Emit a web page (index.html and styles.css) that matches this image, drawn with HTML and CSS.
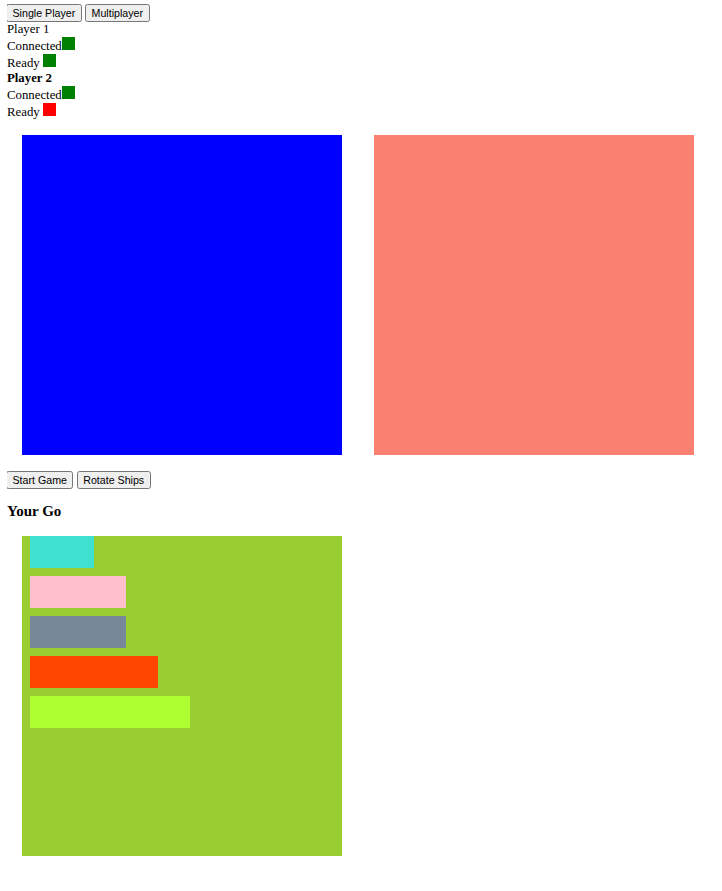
FILE: index.html
```html
<!DOCTYPE html>
<html lang="en">
<head>
<meta charset="UTF-8">
<title>Battleships</title>
<link rel="stylesheet" href="styles.css">
</head>
<body>
<div class="modes">
	<button id="singlePlayerButton">Single Player</button>
	<button id="multiPlayerButton">Multiplayer</button>
</div>

<div class="player p1">
	<div>Player 1</div>
	<div>Connected<span class="light on"></span></div>
	<div>Ready <span class="light on"></span></div>
</div>
<div class="player p2">
	<div class="me">Player 2</div>
	<div>Connected<span class="light on"></span></div>
	<div>Ready <span class="light off"></span></div>
</div>

<div class="boards">
	<div class="grid grid-user"></div>
	<div class="grid grid-computer"></div>
</div>

<div class="controls">
	<button id="start">Start Game</button>
	<button id="rotate">Rotate Ships</button>
</div>
<h3 class="turn">Your Go</h3>

<div class="grid-display">
	<div class="ship destroyer"></div>
	<div class="ship submarine"></div>
	<div class="ship cruiser"></div>
	<div class="ship battleship"></div>
	<div class="ship carrier"></div>
</div>
</body>
</html>
```

FILE: styles.css
```css
body{margin:4px 7px; font-family:"Liberation Serif", "Times New Roman", serif; font-size:12.8px;}
button{font-family:"Liberation Sans", Arial, sans-serif; font-size:10.67px; padding:1px 4.5px; margin:0; color:#000;}
.modes button:first-child, .controls button:first-child{margin-left:-1px;}
.me{font-weight:bold;}
.light{display:inline-block; width:13px; height:13px;}
.light.on{background:green;}
.light.off{background:red;}

.boards{display:flex; gap:32px; margin:15px 0 16px 15px;}
.grid{width:320px; height:320px;}
.grid-user{background:blue;}
.grid-computer{background:salmon;}

.turn{font-size:15px; margin:14px 0 16px;}

.grid-display{width:320px; height:320px; margin-left:15px; background:yellowgreen; display:flex; flex-direction:column; gap:8px; padding-left:8px; box-sizing:border-box;}
.ship{height:32px;}
.destroyer{width:64px; background:turquoise;}
.submarine{width:96px; background:pink;}
.cruiser{width:96px; background:lightslategray;}
.battleship{width:128px; background:orangered;}
.carrier{width:160px; background:greenyellow;}
```
